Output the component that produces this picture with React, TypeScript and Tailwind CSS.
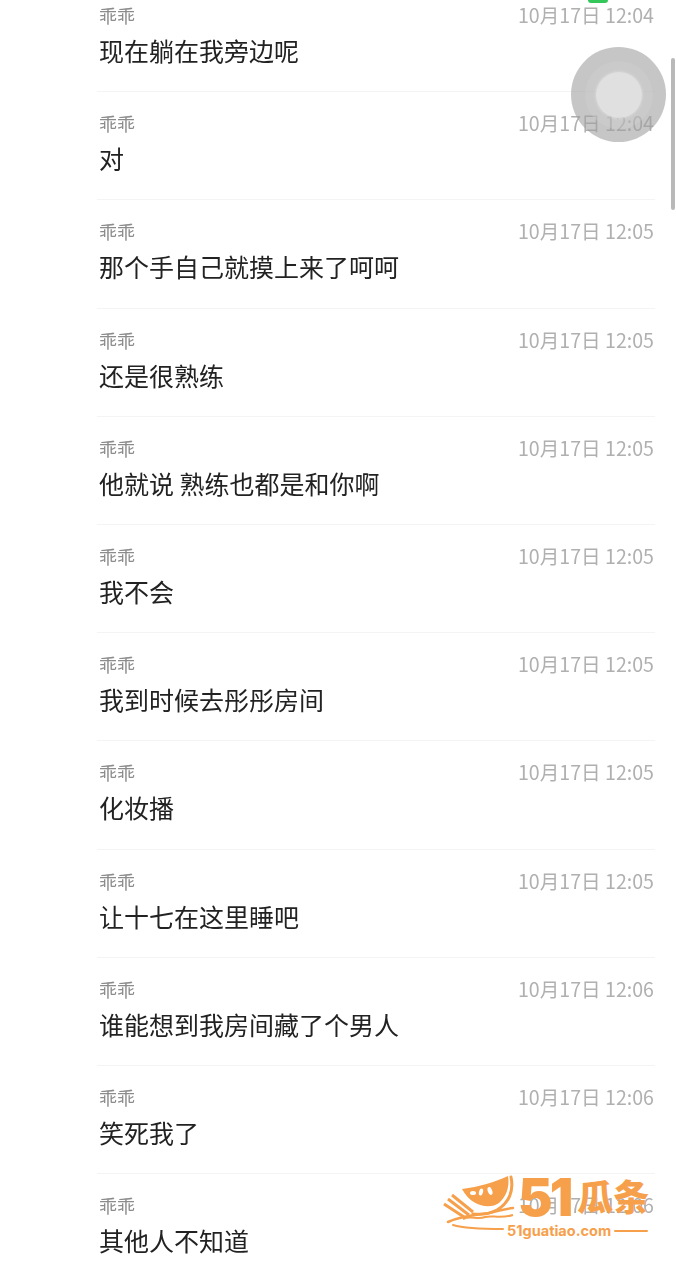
// 聊天记录搜索结果列表（截图复刻）
const ROWS = [
  { time: '10月17日 12:04', text: '现在躺在我旁边呢' },
  { time: '10月17日 12:04', text: '对' },
  { time: '10月17日 12:05', text: '那个手自己就摸上来了呵呵' },
  { time: '10月17日 12:05', text: '还是很熟练' },
  { time: '10月17日 12:05', text: '他就说 熟练也都是和你啊' },
  { time: '10月17日 12:05', text: '我不会' },
  { time: '10月17日 12:05', text: '我到时候去彤彤房间' },
  { time: '10月17日 12:05', text: '化妆播' },
  { time: '10月17日 12:05', text: '让十七在这里睡吧' },
  { time: '10月17日 12:06', text: '谁能想到我房间藏了个男人' },
  { time: '10月17日 12:06', text: '笑死我了' },
  { time: '10月17日 12:06', text: '其他人不知道' },
]

function Row({ time, text }: { time: string; text: string }) {
  return (
    <li className="h-[108.2px] ml-[97px] mr-[21px] pl-[2px] border-b border-[#f4f4f4] pt-[20px]">
      <div className="flex items-start justify-between">
        <span className="text-[18px] leading-[22px] text-[#8c8c8c]">乖乖</span>
        <span className="mr-[1px] text-[19.6px] leading-[22px] text-[#b0b0b0] whitespace-nowrap">{time}</span>
      </div>
      <p className="mt-[9px] text-[25px] leading-[30px] text-[#222222]">{text}</p>
    </li>
  )
}

function Logo() {
  return (
    <div className="absolute left-[443px] top-[1173px] w-[212px] flex flex-col text-[#f7a04b]">
      {/* 西瓜 + 波浪 */}
      <svg className="absolute left-0 top-0" width="84" height="62" viewBox="0 0 84 62" fill="none">
        <path d="M19 16 C36 14 52 9 65 3 C67 14 63 24 56 30 C48 36 29 35 19 16Z" fill="currentColor" />
        <ellipse cx="30" cy="20" rx="3" ry="2" fill="#fff" />
        <ellipse cx="38" cy="19" rx="2" ry="3.5" fill="#fff" transform="rotate(15 38 19)" />
        <ellipse cx="47" cy="18" rx="2.2" ry="4" fill="#fff" transform="rotate(-20 47 18)" />
        <path d="M68 4 C71 18 66 30 54 37 C46 41 38 42 30 41" stroke="currentColor" strokeWidth="3" strokeLinecap="round" />
        <path d="M9 22 L30 39 M5 26 L26 42 M1 31 L21 44" stroke="currentColor" strokeWidth="3" />
        <path d="M5 49 C20 42 34 42 46 40 C54 38 62 36 70 35" stroke="currentColor" strokeWidth="2.5" strokeLinecap="round" />
        <path d="M20 46 C28 42 34 47 42 44 C50 42 56 46 70 42" stroke="currentColor" strokeWidth="2" />
        <path d="M10 52 C20 55 38 56 60 56" stroke="currentColor" strokeWidth="2" strokeLinecap="round" />
      </svg>
      <div className="pl-[75px] flex items-center h-[50px] whitespace-nowrap font-['Inter','Noto_Sans_CJK_SC',sans-serif] font-black">
        <span className="text-[52px] leading-[50px] tracking-[-3px]">51</span>
        <span className="ml-[7px] text-[36px] leading-[50px]">瓜条</span>
      </div>
      <div className="pl-[64px] flex items-center gap-[3px]">
        <span className="font-['Inter',sans-serif] font-bold text-[14.5px] leading-[16px] whitespace-nowrap">51guatiao.com</span>
        <span className="w-[34px] h-[2px] rounded-full bg-[#f7a04b]" />
      </div>
    </div>
  )
}

export default function App() {
  return (
    <div className="relative w-[676px] h-[1280px] overflow-hidden bg-white font-['Noto_Sans_CJK_SC','Inter',sans-serif]">
      <ul className="mt-[-16px] blur-[0.4px]">
        {ROWS.map((r, i) => (
          <Row key={i} time={r.time} text={r.text} />
        ))}
      </ul>

      {/* 顶部绿色角标 */}
      <div className="absolute left-[588px] top-0 w-[20px] h-[3px] rounded-b-[4px] bg-[#34c759]" />
      {/* 滚动条 */}
      <div className="absolute left-[671px] top-[58px] w-[4px] h-[152px] rounded-full bg-[#b9b9b9]" />
      {/* 悬浮按钮 */}
      <div className="absolute left-[571px] top-[47px] w-[95px] h-[95px] rounded-full bg-[#a0a0a0]/60 flex items-center justify-center">
        <div className="w-[68px] h-[68px] rounded-full bg-[#d0d0d0]/35 flex items-center justify-center">
          <div className="w-[46px] h-[46px] rounded-full bg-[#e2e2e2]/90 shadow-[0_0_3px_#e2e2e2]" />
        </div>
      </div>
      <Logo />
    </div>
  )
}
